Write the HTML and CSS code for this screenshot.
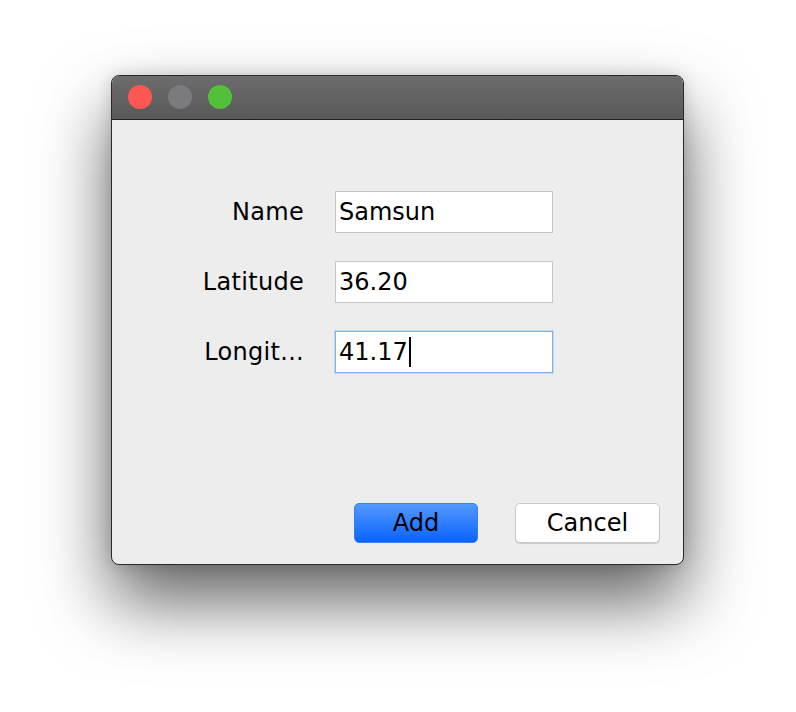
FILE: index.html
```html
<!DOCTYPE html>
<html>
<head>
<meta charset="utf-8">
<link rel="stylesheet" href="styles.css">
</head>
<body>
<div class="stage">
  <div class="window">
    <div class="titlebar">
      <span class="light red"></span>
      <span class="light gray"></span>
      <span class="light green"></span>
    </div>
    <div class="content">
      <div class="form">
        <div class="label">Name</div>
        <div class="field">Samsun</div>
        <div class="label">Latitude</div>
        <div class="field">36.20</div>
        <div class="label">Longit...</div>
        <div class="field focused">41.17<span class="caret"></span></div>
      </div>
      <div class="buttons">
        <div class="btn primary">Add</div>
        <div class="btn secondary">Cancel</div>
      </div>
    </div>
  </div>
</div>
</body>
</html>
```

FILE: styles.css
```css
html, body {
  margin: 0;
  padding: 0;
  background: #ffffff;
}
body {
  width: 796px;
  height: 712px;
  overflow: hidden;
  font-family: "DejaVu Sans", "Noto Sans", sans-serif;
}
.stage {
  padding: 75px 0 0 111px;
}
.window {
  width: 573px;
  height: 490px;
  box-sizing: border-box;
  border: 1px solid #2a2a2a;
  border-radius: 8px;
  overflow: hidden;
  display: flex;
  flex-direction: column;
  background: #ededed;
  box-shadow: 0 36px 70px rgba(0,0,0,0.62), 0 0 16px rgba(0,0,0,0.15);
}
.titlebar {
  height: 44px;
  flex: none;
  box-sizing: border-box;
  background: linear-gradient(#6c6c6c, #595959);
  border-bottom: 1px solid #1f1f1f;
  display: flex;
  align-items: center;
  gap: 16px;
  padding-left: 16px;
  padding-bottom: 2px;
}
.light {
  width: 24px;
  height: 24px;
  border-radius: 50%;
}
.red { background: #fd5754; }
.gray { background: #7b7b7d; }
.green { background: #52c03a; }
.content {
  flex: 1;
  display: flex;
  flex-direction: column;
  justify-content: space-between;
  padding: 71px 23px 21px 0;
}
.form {
  display: grid;
  grid-template-columns: 192px 218px;
  column-gap: 31px;
  row-gap: 28px;
  align-items: center;
}
.label {
  text-align: right;
  font-size: 24px;
  letter-spacing: 0.3px;
  color: #000;
}
.field {
  height: 42px;
  box-sizing: border-box;
  background: #fff;
  border: 1px solid #c6c6c6;
  font-size: 24px;
  color: #000;
  padding-left: 3px;
  display: flex;
  align-items: center;
}
.field.focused {
  border: 1px solid #7fb1ec;
  box-shadow: 0 0 0 1px rgba(127,177,236,0.35);
}
.caret {
  display: inline-block;
  width: 2px;
  height: 30px;
  background: #000;
  margin-left: 1px;
}
.buttons {
  display: flex;
  justify-content: flex-end;
  gap: 37px;
}
.btn {
  height: 40px;
  box-sizing: border-box;
  border-radius: 5px;
  display: flex;
  align-items: center;
  justify-content: center;
  font-size: 24px;
  color: #000;
}
.primary {
  width: 124px;
  background: linear-gradient(#5299ff, #0a63ff);
  border: 1px solid #3a7ff0;
}
.secondary {
  width: 145px;
  background: #fff;
  border: 1px solid #c8c8c8;
  box-shadow: 0 1px 1px rgba(0,0,0,0.15);
}
```
